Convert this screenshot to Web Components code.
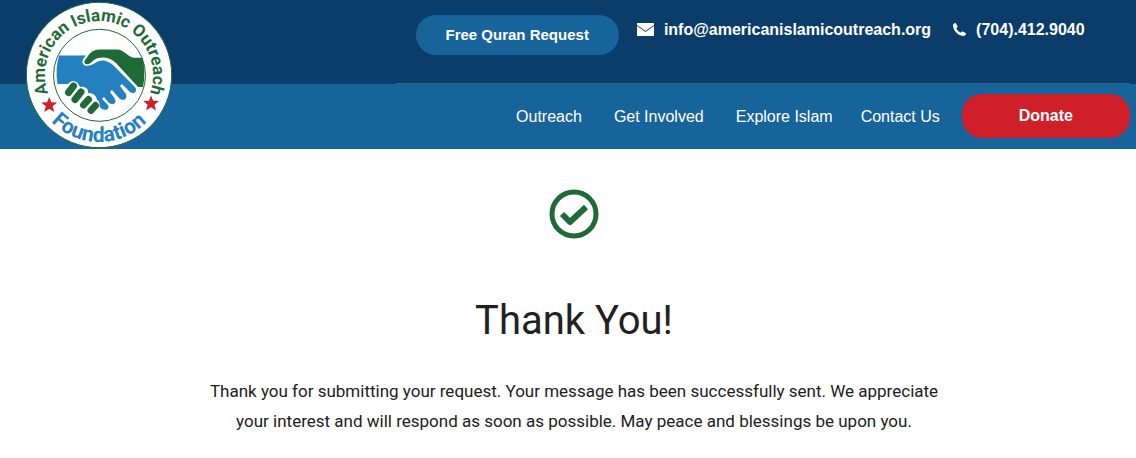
<!DOCTYPE html>
<html lang="en">
<head>
<meta charset="utf-8">
<meta name="viewport" content="width=device-width, initial-scale=1">
<title>Thank You</title>
<style>
  body {
    margin: 0;
    background: #fff;
    color: #212121;
    font-family: "Liberation Sans", Arial, sans-serif;
    --dark-blue: #0b3d6b;
    --blue: #17649b;
    --green: #1e6b37;
    --red: #cf2029;
  }
</style>
</head>
<body>
<site-header>
  <site-logo slot="logo"></site-logo>
  <pill-link slot="top" href="#quran">Free Quran Request</pill-link>
  <contact-link slot="top" icon="mail" href="mailto:info@americanislamicoutreach.org">info@americanislamicoutreach.org</contact-link>
  <contact-link slot="top" icon="phone" href="tel:7044129040">(704).412.9040</contact-link>
  <nav-link slot="nav" class="parent" href="#outreach">Outreach</nav-link>
  <nav-link slot="nav" class="parent" href="#involved">Get Involved</nav-link>
  <nav-link slot="nav" href="#explore">Explore Islam</nav-link>
  <nav-link slot="nav" href="#contact">Contact Us</nav-link>
  <pill-link slot="nav" large href="#donate">Donate</pill-link>
</site-header>
<thank-you-message>
  <span slot="title">Thank You!</span>
  Thank you for submitting your request. Your message has been successfully sent. We appreciate your interest and will respond as soon as possible. May peace and blessings be upon you.
</thank-you-message>

<script>
(function () {
  'use strict';

  // shared base, renders the template getter once
  class BaseElement extends HTMLElement {
    constructor() {
      super();
      this.attachShadow({mode: 'open'});
    }

    connectedCallback() {
      this.shadowRoot.innerHTML = this.template;
    }
  }

  customElements.define('site-header', class SiteHeader extends BaseElement {
    get template() {
      return `
      <style>
        :host {
          display: block;
          background: linear-gradient(var(--dark-blue) 84px, var(--blue) 84px);
        }
        header {
          display: grid;
          grid-template-columns: 35% 1fr;
          padding-right: 6px;
        }
        .logo {
          padding: 1px 0 0 25px;
        }
        .top {
          display: flex;
          align-items: flex-start;
          gap: 18px;
          box-sizing: border-box;
          min-height: 84px;
          padding: 15px 0 0 20px;
          border-bottom: 1px solid #33648c;
        }
        nav {
          display: flex;
          align-items: center;
          justify-content: flex-end;
          gap: 28px;
          box-sizing: border-box;
          min-height: 65px;
          padding-bottom: 2px;
        }
      </style>
      <header>
        <div class="logo"><slot name="logo"></slot></div>
        <div>
          <div class="top"><slot name="top"></slot></div>
          <nav><slot name="nav"></slot></nav>
        </div>
      </header>
    `;
    }
  });

  customElements.define('site-logo', class SiteLogo extends BaseElement {
    get template() {
      return `
      <style>
        :host {
          display: block;
          width: 148px;
          height: 148px;
        }
        svg {
          display: block;
        }
        text {
          font-family: Roboto, sans-serif;
          font-weight: bold;
        }
      </style>
      <svg width="148" height="148" viewBox="25 1 148 148" role="img" aria-label="American Islamic Outreach Foundation">
        <defs>
          <path id="upper" d="M52.8 103A54 54 0 1 1 145.200 103"/>
          <path id="lower" d="M45 114.600A67 67 0 0 0 153 114.600"/>
        </defs>
        <circle cx="99" cy="75" r="72.700" fill="#fff" stroke="#1e6b37"/>
        <circle cx="99.500" cy="75.300" r="46" fill="none" stroke="#1e6b37"/>
        <text font-size="17" fill="#1e6b37" text-anchor="middle"><textPath href="#upper" startOffset="50%">American Islamic Outreach</textPath></text>
        <text font-size="21" fill="#2580bf" text-anchor="middle"><textPath href="#lower" startOffset="50%">Foundation</textPath></text>
        <path fill="#cf2029" d="M49.200 97l2.200 5.300 5.700.3-4.400 3.600 1.500 5.800-5-3.200-4.900 3.200 1.500-5.800-4.400-3.600 5.700-.3zM151 95.500l2.200 5.300 5.700.3-4.400 3.600 1.500 5.800-5-3.200-4.900 3.200 1.500-5.800-4.400-3.600 5.700-.3z"/>
        <!-- left arm and hand -->
        <path fill="#2580bf" d="M59 55.500H86C83 59 81 62 84 65C87 67 92 65 95 63C101 59 107 60 113 65L135 87C138 91 134 95 130 92L122 84L120 86L126 94C128 99 123 102 119 98L112 90L110 92L115 99C117 104 112 106 108 102L104 97L102 99L108 105C110 109 106 111 102 109C98 107 101 101 97 100C96 94 92 93 88 93C89 88 84 86 80 87C77 80 72 79 68 84H57.500Q55 69 59 55.500Z"/>
        <!-- right arm -->
        <path fill="#1e6b37" d="M88 56C91 51 95 49.500 101 49.500H118C124 50 128 57 134 57.700H142.500Q146 72 143 87L138 87L116 63C109 57 101 56 94 60C91 63 87 66 84.500 63C84 60 86 59 88 56Z"/>
        <!-- right hand fingers -->
        <g stroke="#1e6b37" stroke-width="7" stroke-linecap="round">
          <path d="M73.500 86L68.500 92.500M81 92L75 99.500M88.500 99.500L83.500 105M95.500 105.500L91 110.500"/>
        </g>
      </svg>
    `;
    }
  });

  customElements.define('pill-link', class PillLink extends BaseElement {
    get template() {
      return `
      <style>
        :host {
          display: block;
        }
        a {
          display: block;
          padding: 0 30px;
          border-radius: 20px;
          background: var(--blue);
          color: #fff;
          font-size: 15px;
          font-weight: bold;
          line-height: 40px;
          text-decoration: none;
          white-space: nowrap;
        }
        :host([large]) {
          margin-left: -6px;
        }
        :host([large]) a {
          padding: 0 57px;
          background: var(--red);
          font-size: 16px;
          line-height: 44px;
        }
      </style>
      <a href="${this.getAttribute('href')}"><slot></slot></a>
    `;
    }
  });

  customElements.define('nav-link', class NavLink extends BaseElement {
    get template() {
      return `
      <style>
        :host {
          display: block;
          padding-top: 2px;
        }
        :host(.parent) {
          padding-right: 4px;
        }
        a {
          color: #fff;
          font-size: 16px;
          line-height: 24px;
          text-decoration: none;
          white-space: nowrap;
        }
      </style>
      <a href="${this.getAttribute('href')}"><slot></slot></a>
    `;
    }
  });

  const icons = {
    mail: '<svg width="17" height="13" viewBox="0 0 17 13"><path fill="currentColor" d="M0 0h17v2L8.500 8 0 2zM0 3l8.500 6L17 3v10H0z"/></svg>',
    phone: '<svg width="13" height="13" viewBox="0 0 13 13"><path fill="currentColor" d="M2.700 0L4.700 3.800 3.300 5.300C4.200 7.300 5.700 8.800 7.700 9.700L9.200 8.300 13 10.300C13 12 11.800 13 10.200 13 5 12.500.5 8 0 2.800 0 1.200 1 0 2.700 0z"/></svg>'
  };

  customElements.define('contact-link', class ContactLink extends BaseElement {
    get template() {
      return `
      <style>
        :host {
          display: block;
          padding-right: 4px;
        }
        a {
          display: flex;
          align-items: center;
          gap: 10px;
          color: #fff;
          font-size: 16px;
          font-weight: bold;
          line-height: 30px;
          text-decoration: none;
          white-space: nowrap;
        }
        svg {
          margin-bottom: 2px;
        }
      </style>
      <a href="${this.getAttribute('href')}">${icons[this.getAttribute('icon')]}<span><slot></slot></span></a>
    `;
    }
  });

  customElements.define('thank-you-message', class ThankYouMessage extends BaseElement {
    get template() {
      return `
      <style>
        :host {
          display: block;
          padding: 40px 0 22px 12px;
          font-family: Roboto, sans-serif;
          text-align: center;
        }
        svg {
          display: block;
          margin: 0 auto;
        }
        h1 {
          margin: 58px 0 31px;
          font-size: 40px;
          font-weight: 400;
          line-height: 48px;
        }
        p {
          max-width: 750px;
          margin: 0 auto;
          font-size: 17px;
          line-height: 30px;
        }
      </style>
      <main>
        <svg width="50" height="50" viewBox="0 0 50 50" fill="none" stroke="#1e6b37" stroke-width="5">
          <circle cx="25" cy="25" r="22"/>
          <path stroke-width="6" stroke-linejoin="round" d="M13 25L21 33L37 18"/>
        </svg>
        <h1><slot name="title"></slot></h1>
        <p><slot></slot></p>
      </main>
    `;
    }
  });
}());
</script>
</body>
</html>
